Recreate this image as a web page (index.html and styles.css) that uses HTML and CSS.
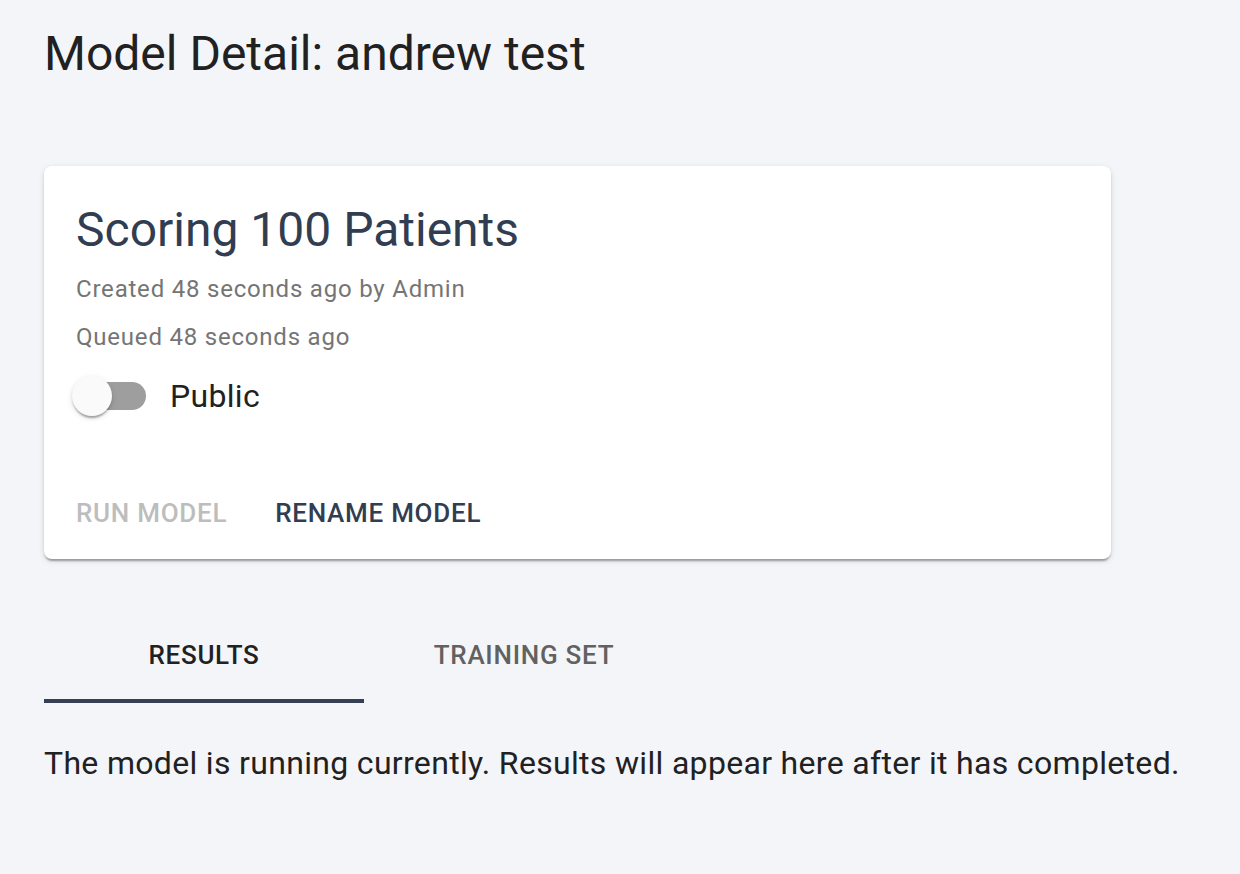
FILE: index.html
```html
<!DOCTYPE html>
<html lang="en">
<head>
<meta charset="utf-8">
<meta name="viewport" content="width=device-width, initial-scale=1">
<title>Model Detail: andrew test</title>
<link rel="stylesheet" href="styles.css">
</head>
<body>
<main class="page">
  <h1 class="page-title">Model Detail: andrew test</h1>
  <section class="card">
    <h2 class="card-title">Scoring 100 Patients</h2>
    <p class="caption">Created 48 seconds ago by Admin</p>
    <p class="caption">Queued 48 seconds ago</p>
    <label class="switch">
      <input class="switch-input" type="checkbox" role="switch">
      <span class="switch-label">Public</span>
    </label>
    <div class="actions">
      <button class="action" type="button" disabled>RUN MODEL</button>
      <button class="action" type="button">RENAME MODEL</button>
    </div>
  </section>
  <div class="tabs" role="tablist">
    <button class="tab tab-active" type="button" role="tab" aria-selected="true">RESULTS</button>
    <button class="tab" type="button" role="tab" aria-selected="false">TRAINING SET</button>
  </div>
  <p class="message">The model is running currently. Results will appear here after it has completed.</p>
</main>
</body>
</html>
```

FILE: styles.css
```css
* {
  box-sizing: border-box;
}

body {
  margin: 0;
  background: #f4f5f9;
  color: #212121;
  font-family: Roboto, "Liberation Sans", sans-serif;
}

.page {
  padding: 22px 44px;
}

.page-title,
.card-title {
  margin: 0;
  font-size: 48px;
  line-height: 64px;
  font-weight: 400;
}

.card {
  max-width: 1067px;
  margin-top: 80px;
  padding: 32px 32px 16px;
  border-radius: 8px;
  background: #fff;
  box-shadow: 0 4px 2px -2px rgba(0, 0, 0, 0.2), 0 2px 2px rgba(0, 0, 0, 0.14), 0 2px 6px rgba(0, 0, 0, 0.12);
}

.card-title {
  margin-bottom: 3px;
  color: #313d50;
}

.caption {
  margin: 0;
  color: #757575;
  font-size: 24px;
  line-height: 48px;
  letter-spacing: 0.033em;
}

.switch {
  display: flex;
  align-items: center;
  gap: 24px;
  height: 56px;
  margin-top: 7px;
  font-size: 32px;
  letter-spacing: 0.01em;
}

.switch-input {
  appearance: none;
  display: flex;
  align-items: center;
  width: 70px;
  height: 28px;
  margin: 0;
  border-radius: 14px;
  background: #9e9e9e;
}

.switch-input::before {
  content: "";
  width: 40px;
  height: 40px;
  margin-left: -4px;
  border-radius: 50%;
  background: #fafafa;
  box-shadow: 0 4px 2px -2px rgba(0, 0, 0, 0.2), 0 2px 2px rgba(0, 0, 0, 0.14), 0 2px 6px rgba(0, 0, 0, 0.12);
}

.switch-input:checked::before {
  margin-left: 34px;
}

.actions {
  display: flex;
  gap: 48px;
  margin-top: 59px;
}

.action,
.tab {
  padding: 0;
  border: 0;
  background: none;
  color: #313d50;
  font: 500 26px/60px Roboto, "Liberation Sans", sans-serif;
  letter-spacing: 0.028em;
}

.action:disabled {
  color: #bdbdbd;
}

.tabs {
  display: flex;
  margin-top: 48px;
}

.tab {
  width: 320px;
  height: 96px;
  padding-top: 4px;
  border-bottom: 4px solid transparent;
  color: #616161;
}

.tab-active {
  border-color: #363f54;
  color: #212121;
}

.message {
  margin: 36px 0 0;
  font-size: 32px;
  line-height: 48px;
  letter-spacing: 0.01em;
}
```
